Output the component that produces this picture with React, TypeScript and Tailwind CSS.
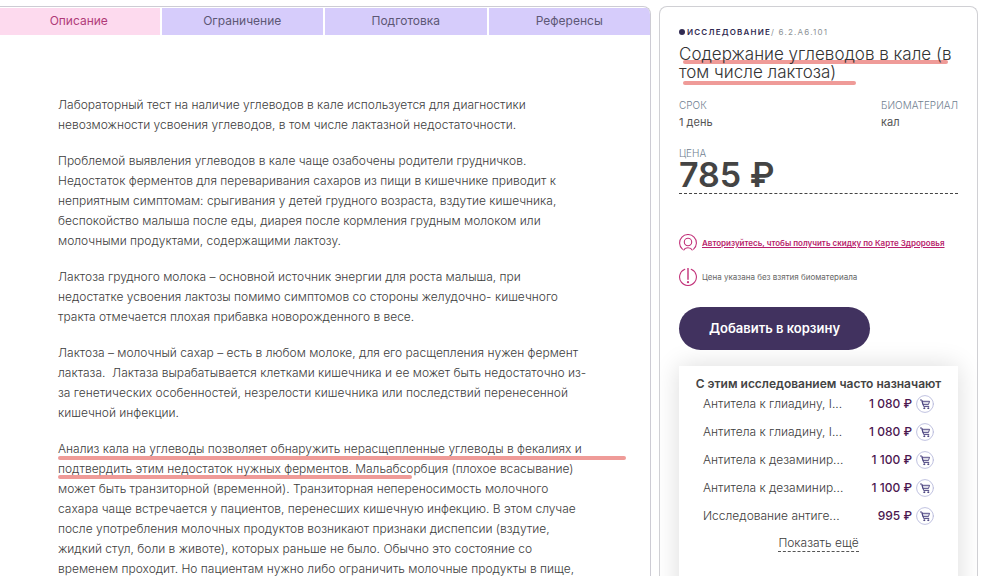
import { useState } from "react"

const tabs = ["Описание", "Ограничение", "Подготовка", "Референсы"]

const paragraphs = [
    [
        "Лабораторный тест на наличие углеводов в кале используется для диагностики",
        "невозможности усвоения углеводов, в том числе лактазной недостаточности.",
    ],
    [
        "Проблемой выявления углеводов в кале чаще озабочены родители грудничков.",
        "Недостаток ферментов для переваривания сахаров из пищи в кишечнике приводит к",
        "неприятным симптомам: срыгивания у детей грудного возраста, вздутие кишечника,",
        "беспокойство малыша после еды, диарея после кормления грудным молоком или",
        "молочными продуктами, содержащими лактозу.",
    ],
    [
        "Лактоза грудного молока – основной источник энергии для роста малыша, при",
        "недостатке усвоения лактозы помимо симптомов со стороны желудочно- кишечного",
        "тракта отмечается плохая прибавка новорожденного в весе.",
    ],
    [
        "Лактоза – молочный сахар – есть в любом молоке, для его расщепления нужен фермент",
        "лактаза.  Лактаза вырабатывается клетками кишечника и ее может быть недостаточно из-",
        "за генетических особенностей, незрелости кишечника или последствий перенесенной",
        "кишечной инфекции.",
    ],
    [
        "Анализ кала на углеводы позволяет обнаружить нерасщепленные углеводы в фекалиях и",
        "подтвердить этим недостаток нужных ферментов. Мальабсорбция (плохое всасывание)",
        "может быть транзиторной (временной). Транзиторная непереносимость молочного",
        "сахара чаще встречается у пациентов, перенесших кишечную инфекцию. В этом случае",
        "после употребления молочных продуктов возникают признаки диспепсии (вздутие,",
        "жидкий стул, боли в животе), которых раньше не было. Обычно это состояние со",
        "временем проходит. Но пациентам нужно либо ограничить молочные продукты в пище,",
    ],
]

const related = [
    { id: 1, name: "Антитела к глиадину, I...", price: "1 080 ₽" },
    { id: 2, name: "Антитела к глиадину, I...", price: "1 080 ₽" },
    { id: 3, name: "Антитела к дезаминир...", price: "1 100 ₽" },
    { id: 4, name: "Антитела к дезаминир...", price: "1 100 ₽" },
    { id: 5, name: "Исследование антиге...", price: "995 ₽" },
]

const Mark = ({ className }: MarkProps) => (
    <span className={`absolute -z-10 h-1 rounded-full bg-[#ef9b98] ${className}`} />
)

const UserIcon = () => (
    <svg className="size-[18px] shrink-0" viewBox="0 0 18 18" fill="none" stroke="#c2327a" strokeWidth="1.1" strokeLinecap="round">
        <path d="M3.4 15.2A8.4 8.4 0 1 1 14.6 15.2" />
        <circle cx="9" cy="8" r="3.7" />
        <path d="M4.8 16C5.6 14.3 7 13.7 9 13.7s3.4.6 4.2 2.3" />
    </svg>
)

const AlertIcon = () => (
    <svg className="size-[18px] shrink-0" viewBox="0 0 18 18" fill="none" stroke="#c2327a" strokeWidth="1.1" strokeLinecap="round">
        <path d="M5.8 1.3A8.4 8.4 0 1 0 12.2 1.3" />
        <path d="M9 .6v10.6" strokeWidth="1.4" />
        <circle cx="9" cy="14.2" r="1.1" fill="#c2327a" stroke="none" />
    </svg>
)

const CartIcon = () => (
    <svg className="size-[18px]" viewBox="0 0 18 18" fill="none" stroke="#4c4480" strokeLinecap="round" strokeLinejoin="round">
        <circle cx="9" cy="9" r="8.4" stroke="#b9bbdc" strokeWidth="0.9" />
        <path d="M4.4 5h1.5l1.7 6.4h5.2" />
        <path d="M6.3 6.3h7.3l-1.2 3.3H7.2z" fill="#4c4480" fillOpacity="0.2" strokeWidth="0.9" />
        <circle cx="8.2" cy="13.2" r="0.5" fill="#4c4480" />
        <circle cx="12.2" cy="13.2" r="0.5" fill="#4c4480" />
    </svg>
)

const Description = () => {
    const [active, setActive] = useState(0)

    return (
        <main className="min-w-0 flex-1 overflow-hidden rounded-tr-lg border-t border-r border-[#cdccd4]">
            <div role="tablist" className="-ml-0.5 grid grid-cols-4 gap-0.5 pt-px">
                {
                    tabs.map((tab, index) => (
                        <button
                            key={tab}
                            role="tab"
                            aria-selected={index === active}
                            onClick={() => setActive(index)}
                            className={index === active
                                ? "h-[27px] bg-[#fddaee] pb-0.5 text-center text-[#b03a78]"
                                : "h-[27px] bg-[#d6ccfb] pb-0.5 text-center text-[#5d5775]"}
                        >
                            {tab}
                        </button>
                    ))
                }
            </div>
            <article className="flex flex-col gap-4 pt-[60px] pl-[58px] leading-5 font-light whitespace-pre text-[#3c3c3c]">
                {
                    paragraphs.map((lines, index) => (
                        <p key={index} className="relative">
                            {lines.join("\n")}
                            {index === 4 && (
                                <>
                                    <Mark className="top-[17px] left-0 w-[568px]" />
                                    <Mark className="top-9 left-0 w-[354px]" />
                                </>
                            )}
                        </p>
                    ))
                }
            </article>
        </main>
    )
}

const Related = () => (
    <section className="mt-4 h-80 bg-white px-4 pt-[9px] shadow-[0_0_24px_rgba(0,0,0,0.14)]">
        <h2 className="text-center leading-[18px] font-semibold whitespace-nowrap text-[#444]">С этим исследованием часто назначают</h2>
        <ul className="-mt-[3px] px-2">
            {
                related.map((item) => (
                    <li key={item.id} className="flex h-7 items-center gap-1">
                        <span className="flex-1 font-light whitespace-nowrap text-[#3c3c3c]">{item.name}</span>
                        <span className="font-medium whitespace-nowrap text-[#4b164f]">{item.price}</span>
                        <button aria-label="Добавить в корзину"><CartIcon /></button>
                    </li>
                ))
            }
        </ul>
        <div className="flex justify-center pt-[5px]">
            <button className="border-b border-dashed border-[#555] leading-4 font-light text-[#3c3c3c]">Показать ещё</button>
        </div>
    </section>
)

const OrderCard = () => (
    <aside className="w-[319px] shrink-0 overflow-hidden rounded-t-lg border border-b-0 border-[#d0d0d4] px-[19px] pt-[19px]">
        <div className="flex items-center text-[8px] leading-3 tracking-[0.15em] text-[#8d9296]">
            <span className="mr-0.5 size-1.5 rounded-full bg-[#312b52]" />
            <span className="font-semibold text-[#312b52]">ИССЛЕДОВАНИЕ</span>
            <span>/ 6.2.A6.101</span>
        </div>
        <h1 className="relative mt-[7px] text-[17px] leading-[18px] font-light whitespace-pre text-[#333]">
            {"Содержание углеводов в кале (в\nтом числе лактоза)"}
            <Mark className="top-[15px] left-1 w-[265px]" />
            <Mark className="top-9 left-1 w-[173px]" />
        </h1>
        <dl className="mt-4 flex justify-between leading-[17px]">
            <div>
                <dt className="text-[10px] font-light text-[#6f8090]">СРОК</dt>
                <dd className="text-[11px]">1 день</dd>
            </div>
            <div>
                <dt className="text-[10px] font-light text-[#6f8090]">БИОМАТЕРИАЛ</dt>
                <dd className="text-[11px]">кал</dd>
            </div>
        </dl>
        <dl className="mt-[15px] border-b border-dashed border-[#444] pb-[3px]">
            <dt className="text-[10px] leading-[14px] font-light text-[#6f8090]">ЦЕНА</dt>
            <dd className="text-[34px] leading-[30px] font-semibold text-[#444]">785 ₽</dd>
        </dl>
        <div className="mt-10 flex items-center gap-[5px] text-[8px] leading-[18px]">
            <UserIcon />
            <a href="#login" className="font-semibold whitespace-nowrap text-[#b81e6c] underline">Авторизуйтесь, чтобы получить скидку по Карте Здроровья</a>
        </div>
        <div className="mt-4 flex items-center gap-[5px] text-[8px] leading-[18px] text-[#666]">
            <AlertIcon />
            <span>Цена указана без взятия биоматериала</span>
        </div>
        <button className="mt-[21px] h-[43px] w-[191px] rounded-full bg-[#41325f] text-[13px] font-semibold text-white">Добавить в корзину</button>
        <Related />
    </aside>
)

export default function App() {
    return (
        <div className="flex h-screen gap-2 overflow-hidden pt-1.5 pr-[22px] font-['Inter','Liberation_Sans',sans-serif] text-[12px] text-[#555]">
            <Description />
            <OrderCard />
        </div>
    )
}

type MarkProps = {
    className: string
}
